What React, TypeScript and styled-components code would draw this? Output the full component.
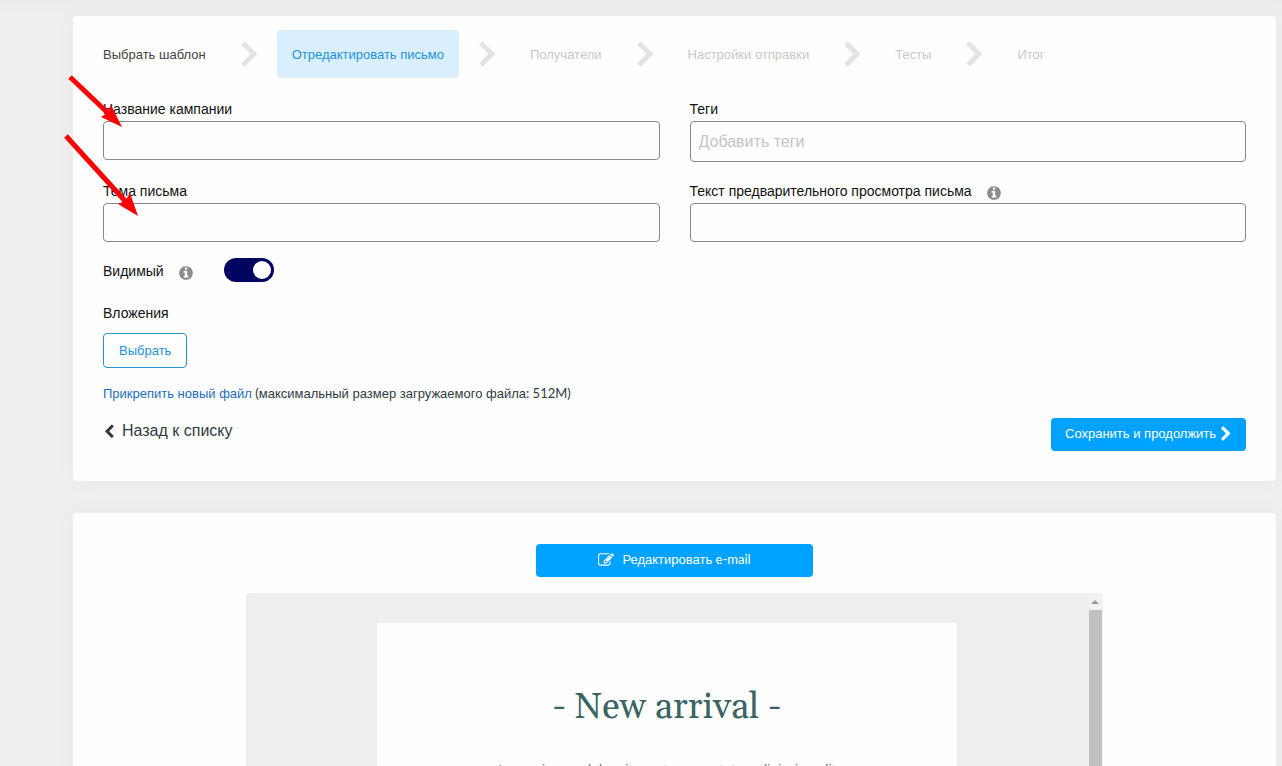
import React from 'react';
import styled, { createGlobalStyle } from 'styled-components';

const GlobalStyle = createGlobalStyle`
  * { box-sizing: border-box; }
  body {
    margin: 0;
    background: #efefef;
    color: #2f3b40;
    font: 13px/20px "Liberation Sans", Arial, sans-serif;
  }
  html, body, #root { height: 100%; }
  button, input { font: inherit; }
  a { text-decoration: none; }
`;

const Page = styled.div`
  position: relative;
  display: flex;
  flex-direction: column;
  gap: 32px;
  height: 100%;
  overflow: hidden;
  padding: 16px 6px 0 73px;
  background: linear-gradient(#ebebeb, #efefef 16px);
`;

const Card = styled.section`
  flex: none;
  padding: 14px 30px 30px;
  border-radius: 4px;
  background: #fefefe;
  box-shadow: 0 0 24px rgba(0, 0, 0, 0.03);
`;

const PreviewCard = styled(Card)`
  display: flex;
  flex-direction: column;
  align-items: center;
  gap: 16px;
  padding-top: 31px;
`;

const Steps = styled.nav`
  display: flex;
  align-items: center;
  gap: 20px;
  margin-left: -15px;
`;

const Step = styled.a<{ $state?: 'done' | 'active' }>`
  padding: 15px 15px 13px;
  border-radius: 4px;
  color: ${p => (p.$state === 'active' ? '#2492e0' : p.$state === 'done' ? '#444' : '#c8c8c8')};
  background: ${p => (p.$state === 'active' ? '#daeffe' : 'transparent')};
`;

const StepChevron = styled.svg`
  width: 16px;
  height: 26px;
  fill: none;
  stroke: #e3e3e3;
  stroke-width: 5;
`;

const Icon = styled.svg<{ $size: number }>`
  flex: none;
  width: ${p => p.$size}px;
  height: ${p => p.$size}px;
  fill: currentColor;
`;

const Latin = styled.span`
  font-family: Lato, sans-serif;
  line-height: 1;
`;

const Fields = styled.div`
  display: grid;
  grid-template-columns: 1fr 1fr;
  column-gap: 30px;
  row-gap: 20px;
  margin-top: 22px;
`;

const Field = styled.div`
  display: flex;
  flex-direction: column;
  gap: 3px;
`;

const Label = styled.label`
  display: inline-flex;
  align-items: center;
  color: #111;
  font-size: 14px;
  line-height: 18px;
`;

const InfoIcon = styled(Icon)`
  margin: 2px 0 -2px 14px;
  color: #8c8c8c;
`;

const TextInput = styled.input`
  width: 100%;
  height: 39px;
  padding: 0 8px;
  border: 1px solid #888;
  border-radius: 4px;
  background: transparent;
  color: #222;
`;

const TagsInput = styled(TextInput)`
  height: 41px;
  font-size: 16px;
  &::placeholder { color: #c4c4c4; opacity: 1; }
`;

const SwitchRow = styled.div`
  display: flex;
  align-items: center;
  gap: 30px;
  margin-top: 16px;
`;

const SwitchLabel = styled(Label)`
  padding-top: 2px;
`;

const Switch = styled.input`
  appearance: none;
  display: flex;
  justify-content: flex-end;
  width: 50px;
  height: 24px;
  margin: 0;
  padding: 3px;
  border-radius: 12px;
  background: #00055f;
  &::before {
    content: "";
    width: 18px;
    height: 18px;
    border-radius: 50%;
    background: #fff;
  }
  &:not(:checked) {
    justify-content: flex-start;
    background: #aaa;
  }
`;

const Attachments = styled.div`
  display: flex;
  flex-direction: column;
  align-items: flex-start;
  margin-top: 20px;
`;

const AttachTitle = styled.h2`
  margin: 0 0 9px;
  color: #111;
  font-size: 14px;
  font-weight: 400;
  line-height: 22px;
`;

const OutlineButton = styled.button`
  height: 35px;
  padding: 0 15px;
  border: 1px solid #2492d0;
  border-radius: 4px;
  background: #fff;
  color: #2492e0;
`;

const Note = styled.p`
  margin: 16px 0 0;
`;

const Link = styled.a`
  color: #1b6fc0;
`;

const Footer = styled.div`
  display: flex;
  justify-content: space-between;
  align-items: flex-start;
  margin-top: 14px;
`;

const BackLink = styled.a`
  display: flex;
  align-items: center;
  gap: 4px;
  color: #2f3b40;
  font-size: 16px;
  line-height: 26px;
`;

const PrimaryButton = styled.button<{ $wide?: boolean }>`
  display: flex;
  align-items: center;
  justify-content: ${p => (p.$wide ? 'center' : 'flex-start')};
  gap: ${p => (p.$wide ? 8 : 2)}px;
  width: ${p => (p.$wide ? 277 : 195)}px;
  height: 33px;
  padding: 0 14px 2px;
  border: 0;
  border-radius: 4px;
  background: #00a2ff;
  color: #fff;
  white-space: nowrap;
`;

const Viewport = styled.div`
  display: flex;
  width: 75%;
  min-height: 300px;
  border-radius: 4px 4px 0 0;
  background: #eee;
  overflow: hidden;
`;

const Letter = styled.article`
  flex: 0 1 580px;
  margin: 30px auto 0;
  padding: 60px 30px;
  background: #fefefe;
  text-align: center;
`;

const LetterTitle = styled.h1`
  margin: 0 0 27px;
  color: #3a6464;
  font: 36px/50px Georgia, Gelasio, "Liberation Serif", serif;
`;

const LetterText = styled.p`
  margin: 0;
  color: #777;
  font-size: 14px;
`;

const ScrollTrack = styled.div`
  display: flex;
  flex-direction: column;
  width: 15px;
  padding: 0 1px;
  background: #f1f1f1;
`;

const ScrollArrow = styled.svg`
  width: 13px;
  height: 17px;
  fill: #999;
`;

const ScrollThumb = styled.div`
  flex: 1;
  background: #c1c1c1;
`;

const Arrows = styled.svg`
  position: absolute;
  top: 70px;
  left: 60px;
  width: 90px;
  height: 150px;
  pointer-events: none;
`;

const Chevron = () => (
  <StepChevron viewBox="0 0 16 26" aria-hidden="true">
    <path d="M2 2 L13 13 L2 24" />
  </StepChevron>
);

const Info = () => (
  <InfoIcon $size={16} viewBox="0 0 1792 1792" aria-hidden="true">
    <path d="M1152 1376v-160q0-14-9-23t-23-9h-96v-512q0-14-9-23t-23-9h-320q-14 0-23 9t-9 23v160q0 14 9 23t23 9h96v320h-96q-14 0-23 9t-9 23v160q0 14 9 23t23 9h448q14 0 23-9t9-23zm-128-896v-160q0-14-9-23t-23-9h-192q-14 0-23 9t-9 23v160q0 14 9 23t23 9h192q14 0 23-9t9-23zm640 416q0 209-103 385.5t-279.5 279.5-385.5 103-385.5-103-279.5-279.5-103-385.5 103-385.5 279.5-279.5 385.5-103 385.5 103 279.5 279.5 103 385.5z" />
  </InfoIcon>
);

const PencilSquare = () => (
  <Icon $size={16} viewBox="0 0 1792 1792" aria-hidden="true">
    <path d="M888 1184l116-116-152-152-116 116v56h96v96h56zm440-720q-16-16-33 1l-350 350q-17 17-1 33t33-1l350-350q17-17 1-33zm80 594v190q0 119-84.5 203.5t-203.5 84.5h-832q-119 0-203.5-84.5t-84.5-203.5v-832q0-119 84.5-203.5t203.5-84.5h832q63 0 117 25 15 7 18 23 3 17-9 29l-49 49q-14 14-32 8-23-6-45-6h-832q-66 0-113 47t-47 113v832q0 66 47 113t113 47h832q66 0 113-47t47-113v-126q0-13 9-22l64-64q15-15 35-7t20 29zm-96-738l288 288-672 672h-288v-288zm444 132l-92 92-288-288 92-92q28-28 68-28t68 28l152 152q28 28 28 68t-28 68z" />
  </Icon>
);

const ChevronRight = () => (
  <Icon $size={16} viewBox="0 0 1792 1792" aria-hidden="true">
    <path d="M1363 877l-742 742q-19 19-45 19t-45-19l-166-166q-19-19-19-45t19-45l531-531-531-531q-19-19-19-45t19-45l166-166q19-19 45-19t45 19l742 742q19 19 19 45t-19 45z" />
  </Icon>
);

const ChevronLeft = () => (
  <Icon $size={15} viewBox="0 0 1792 1792" aria-hidden="true">
    <path d="M1267 339l-531 531 531 531q19 19 19 45t-19 45l-166 166q-19 19-45 19t-45-19l-742-742q-19-19-19-45t19-45l742-742q19-19 45-19t45 19l166 166q19 19 19 45t-19 45z" />
  </Icon>
);

const steps: { label: string; state?: 'done' | 'active' }[] = [
  { label: 'Выбрать шаблон', state: 'done' },
  { label: 'Отредактировать письмо', state: 'active' },
  { label: 'Получатели' },
  { label: 'Настройки отправки' },
  { label: 'Тесты' },
  { label: 'Итог' },
];

export default function App() {
  return (
    <>
      <GlobalStyle />
      <Page>
        <Card>
          <Steps>
            {steps.map((s, i) => (
              <React.Fragment key={s.label}>
                {i > 0 && <Chevron />}
                <Step href="#" $state={s.state}>{s.label}</Step>
              </React.Fragment>
            ))}
          </Steps>
          <form onSubmit={e => e.preventDefault()}>
            <Fields>
              <Field>
                <Label htmlFor="name">Название кампании</Label>
                <TextInput id="name" />
              </Field>
              <Field>
                <Label htmlFor="tags">Теги</Label>
                <TagsInput id="tags" placeholder="Добавить теги" />
              </Field>
              <Field>
                <Label htmlFor="subject">Тема письма</Label>
                <TextInput id="subject" />
              </Field>
              <Field>
                <Label htmlFor="preview">Текст предварительного просмотра письма<Info /></Label>
                <TextInput id="preview" />
              </Field>
            </Fields>
            <SwitchRow>
              <SwitchLabel htmlFor="visible">Видимый<Info /></SwitchLabel>
              <Switch id="visible" type="checkbox" role="switch" defaultChecked />
            </SwitchRow>
            <Attachments>
              <AttachTitle>Вложения</AttachTitle>
              <OutlineButton type="button">Выбрать</OutlineButton>
              <Note>
                <Link href="#">Прикрепить новый файл</Link>
                <Latin> (</Latin>максимальный размер загружаемого файла<Latin>: 512M)</Latin>
              </Note>
            </Attachments>
            <Footer>
              <BackLink href="#"><ChevronLeft />Назад к списку</BackLink>
              <PrimaryButton type="submit">Сохранить и продолжить<ChevronRight /></PrimaryButton>
            </Footer>
          </form>
        </Card>
        <PreviewCard>
          <PrimaryButton type="button" $wide>
            <PencilSquare />
            <span>Редактировать<Latin> e-mail</Latin></span>
          </PrimaryButton>
          <Viewport>
            <Letter>
              <LetterTitle>- New arrival -</LetterTitle>
              <LetterText>Lorem ipsum dolor sit amet, consectetur adipiscing elit</LetterText>
            </Letter>
            <ScrollTrack>
              <ScrollArrow viewBox="0 0 13 17"><path d="M2 11 L6 7 L10 11 Z" /></ScrollArrow>
              <ScrollThumb />
            </ScrollTrack>
          </Viewport>
        </PreviewCard>
        <Arrows viewBox="60 70 90 150" aria-hidden="true">
          <g fill="red" stroke="red">
            <path d="M70 77 L110 115" strokeWidth="5" />
            <path d="M122 127 L101 117 L107 113 L111 105 Z" stroke="none" />
            <path d="M66 136 L126 202" strokeWidth="5" />
            <path d="M138 216 L118 204 L125 201 L130 193 Z" stroke="none" />
          </g>
        </Arrows>
      </Page>
    </>
  );
}
